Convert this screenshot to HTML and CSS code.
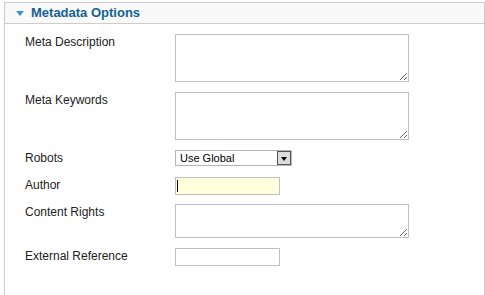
FILE: index.html
```html
<!DOCTYPE html>
<html>
<head>
<meta charset="utf-8">
<link rel="stylesheet" href="styles.css">
</head>
<body>
<div class="panel">
  <h3 class="panel-title"><span class="toggle"></span>Metadata Options</h3>
  <div class="panel-body">
    <ul class="formlist">
      <li class="row"><label class="lbl">Meta Description</label><textarea class="ta"></textarea></li>
      <li class="row"><label class="lbl">Meta Keywords</label><textarea class="ta"></textarea></li>
      <li class="row row-select"><label class="lbl">Robots</label>
        <span class="select-wrap"><select class="sel"><option>Use Global</option></select><span class="select-btn"><span class="arrow"></span></span></span>
      </li>
      <li class="row"><label class="lbl">Author</label><span class="input-wrap"><input class="inp inp-focus" type="text"><span class="caret"></span></span></li>
      <li class="row row-tight"><label class="lbl">Content Rights</label><textarea class="ta ta-short"></textarea></li>
      <li class="row"><label class="lbl">External Reference</label><input class="inp" type="text"></li>
    </ul>
  </div>
</div>
</body>
</html>
```
FILE: styles.css
```css
html, body {
  margin: 0;
  padding: 0;
  background: #fff;
  overflow: hidden;
}
body {
  font-family: "Liberation Sans", Arial, sans-serif;
  font-size: 12px;
  color: #222;
}
.panel {
  margin: 2px 0 0 4px;
  border: 1px solid #ccc;
  min-height: 320px;
  background: #fff;
}
.panel-title {
  margin: 0;
  height: 20px;
  line-height: 20px;
  background: #f9f9f9;
  border-bottom: 1px solid #ccc;
  font-size: 13px;
  font-weight: bold;
  color: #146295;
  display: flex;
  align-items: center;
}
.toggle {
  width: 0;
  height: 0;
  border-left: 4.5px solid transparent;
  border-right: 4.5px solid transparent;
  border-top: 5px solid #3b93d6;
  margin: 1px 7px 0 11px;
}
.panel-body {
  padding: 10px 0 0 20px;
}
.formlist {
  list-style: none;
  margin: 0;
  padding: 0;
  display: flex;
  flex-direction: column;
  gap: 10px;
}
.row {
  display: flex;
  align-items: flex-start;
}
.row-select {
  min-height: 17px;
}
.row-tight {
  margin-top: -1px;
}
.lbl {
  width: 150px;
  flex: none;
  line-height: 14px;
  padding-top: 1px;
  font-size: 12px;
  color: #222;
}
.ta {
  box-sizing: border-box;
  width: 234px;
  height: 48px;
  margin: 0;
  padding: 2px;
  border: 1px solid #c0c0c0;
  font-family: "Liberation Sans", Arial, sans-serif;
  font-size: 12px;
  background: #fff;
  outline: none;
  display: block;
}
.ta-short {
  height: 34px;
}
.inp {
  box-sizing: border-box;
  width: 105px;
  height: 18px;
  margin: 0;
  padding: 0 2px;
  border: 1px solid #c0c0c0;
  font-family: "Liberation Sans", Arial, sans-serif;
  font-size: 12px;
  background: #fff;
  outline: none;
  display: block;
}
.inp-focus {
  background: #ffffdd;
}
.input-wrap {
  position: relative;
  display: block;
}
.caret {
  position: absolute;
  left: 2px;
  top: 3px;
  width: 1px;
  height: 12px;
  background: #000;
}
.select-wrap {
  position: relative;
  display: block;
  width: 117px;
  height: 16px;
}
.sel {
  appearance: none;
  -webkit-appearance: none;
  box-sizing: border-box;
  width: 117px;
  height: 16px;
  margin: 0;
  padding: 0 0 0 4px;
  border: 1px solid #b5b5b5;
  border-radius: 0;
  background: #fff;
  font-family: "Liberation Sans", Arial, sans-serif;
  font-size: 11px;
  line-height: 14px;
  color: #000;
  outline: none;
  display: block;
}
.select-btn {
  position: absolute;
  right: 1px;
  top: 1px;
  box-sizing: border-box;
  width: 14px;
  height: 14px;
  border: 1px solid #555;
  background: #dcdcdc;
  display: flex;
  align-items: center;
  justify-content: center;
}
.arrow {
  width: 0;
  height: 0;
  border-left: 3.5px solid transparent;
  border-right: 3.5px solid transparent;
  border-top: 4px solid #000;
  margin-top: 2px;
}
```
